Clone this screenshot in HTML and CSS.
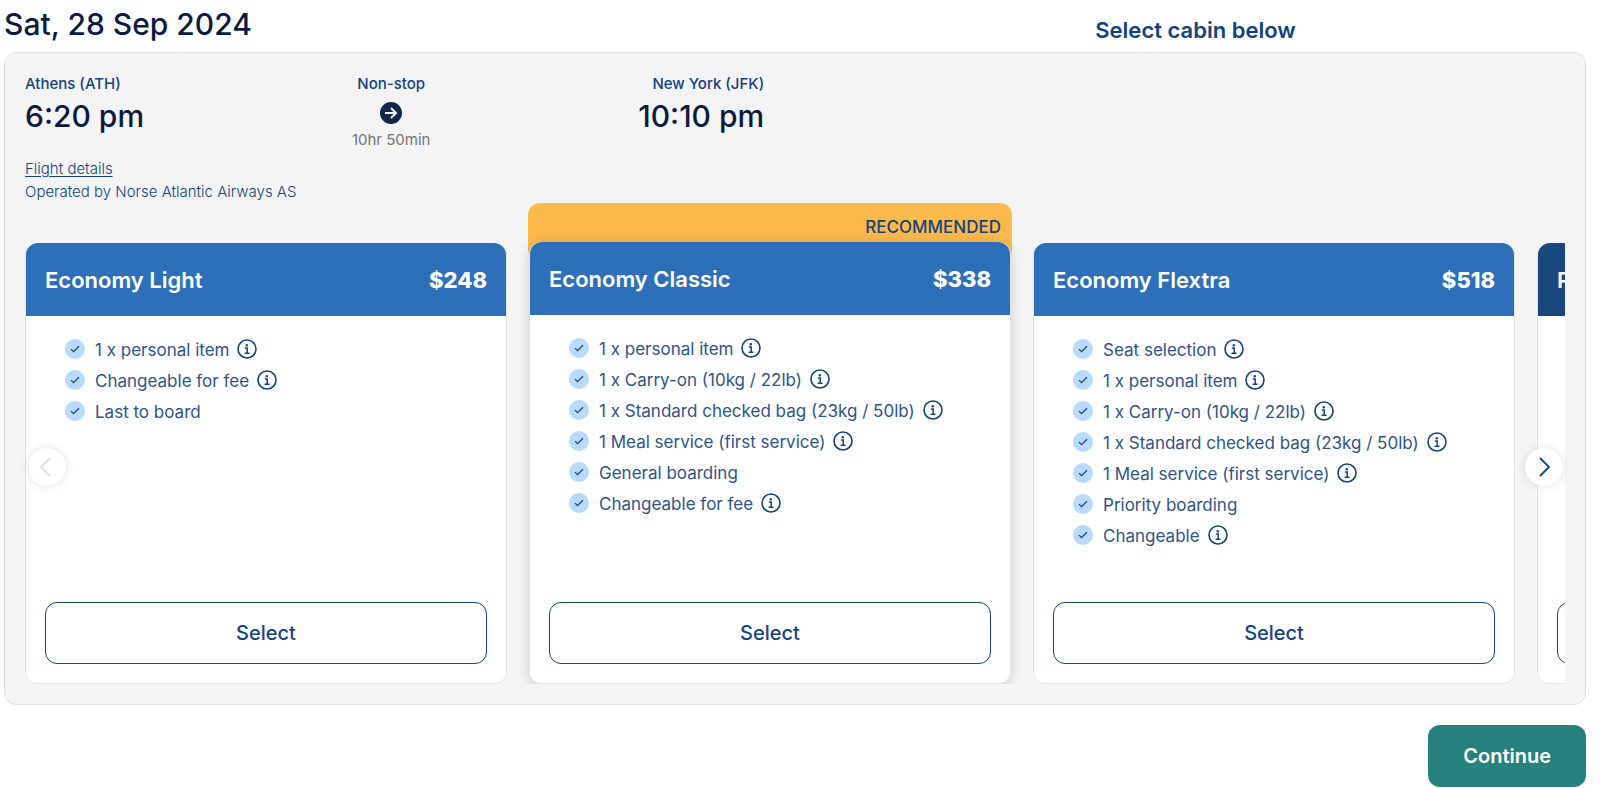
FILE: index.html
```html
<!DOCTYPE html>
<html lang="en">
<head>
<meta charset="utf-8">
<meta name="viewport" content="width=device-width, initial-scale=1">
<title>Select flight</title>
<link rel="stylesheet" href="styles.css">
</head>
<body>
<svg class="sprite" aria-hidden="true">
  <symbol id="check" viewBox="0 0 20 20">
    <circle cx="10" cy="10" r="10" fill="#b8dbfd"/>
    <path d="M6 10.2l2.5 2.5L14 7.3" fill="none" stroke="#1d3f70" stroke-width="1.2"/>
  </symbol>
  <symbol id="info" viewBox="0 0 20 20">
    <circle cx="10" cy="10" r="9" fill="none" stroke="#14427f" stroke-width="1.6"/>
    <circle cx="9.8" cy="6.2" r="1.2" fill="#14427f"/>
    <path d="M7.9 9.1h2.3v5M7.6 14.2h4.9" fill="none" stroke="#14427f" stroke-width="1.5"/>
  </symbol>
</svg>
<main class="page">
  <header class="heading">
    <h1 class="heading-date">Sat, 28 Sep 2024</h1>
    <p class="heading-hint">Select cabin below</p>
  </header>

  <section class="flight">
    <div class="route">
      <div class="stop">
        <span class="label">Athens (ATH)</span>
        <span class="time">6:20 pm</span>
      </div>
      <div class="stop stop-middle">
        <span class="label">Non-stop</span>
        <svg class="arrow" viewBox="0 0 22 22" aria-hidden="true">
          <circle cx="11" cy="11" r="11" fill="#14264a"/>
          <path d="M5 11h11M11 6l5 5-5 5" fill="none" stroke="#f4f4f4" stroke-width="2"/>
        </svg>
        <span class="duration">10hr 50min</span>
      </div>
      <div class="stop stop-end">
        <span class="label">New York (JFK)</span>
        <span class="time">10:10 pm</span>
      </div>
    </div>
    <div class="meta">
      <a class="details" href="#">Flight details</a>
      <span>Operated by Norse Atlantic Airways AS</span>
    </div>

    <div class="carousel">
      <div class="track">
        <div class="slide">
          <article class="card">
            <header class="card-head"><h2 class="card-name">Economy Light</h2><span class="price">$248</span></header>
            <ul class="features">
              <li class="feature"><svg class="icon"><use href="#check"/></svg><span class="feature-text">1 x personal item</span><svg class="icon icon-info"><use href="#info"/></svg></li>
              <li class="feature"><svg class="icon"><use href="#check"/></svg><span class="feature-text">Changeable for fee</span><svg class="icon icon-info"><use href="#info"/></svg></li>
              <li class="feature"><svg class="icon"><use href="#check"/></svg><span class="feature-text">Last to board</span></li>
            </ul>
            <button class="select" type="button">Select</button>
          </article>
        </div>
        <div class="slide slide-recommended">
          <p class="banner">RECOMMENDED</p>
          <article class="card card-raised">
            <header class="card-head"><h2 class="card-name">Economy Classic</h2><span class="price">$338</span></header>
            <ul class="features">
              <li class="feature"><svg class="icon"><use href="#check"/></svg><span class="feature-text">1 x personal item</span><svg class="icon icon-info"><use href="#info"/></svg></li>
              <li class="feature"><svg class="icon"><use href="#check"/></svg><span class="feature-text">1 x Carry-on (10kg / 22lb)</span><svg class="icon icon-info"><use href="#info"/></svg></li>
              <li class="feature"><svg class="icon"><use href="#check"/></svg><span class="feature-text">1 x Standard checked bag (23kg / 50lb)</span><svg class="icon icon-info"><use href="#info"/></svg></li>
              <li class="feature"><svg class="icon"><use href="#check"/></svg><span class="feature-text">1 Meal service (first service)</span><svg class="icon icon-info"><use href="#info"/></svg></li>
              <li class="feature"><svg class="icon"><use href="#check"/></svg><span class="feature-text">General boarding</span></li>
              <li class="feature"><svg class="icon"><use href="#check"/></svg><span class="feature-text">Changeable for fee</span><svg class="icon icon-info"><use href="#info"/></svg></li>
            </ul>
            <button class="select" type="button">Select</button>
          </article>
        </div>
        <div class="slide">
          <article class="card">
            <header class="card-head"><h2 class="card-name">Economy Flextra</h2><span class="price">$518</span></header>
            <ul class="features">
              <li class="feature"><svg class="icon"><use href="#check"/></svg><span class="feature-text">Seat selection</span><svg class="icon icon-info"><use href="#info"/></svg></li>
              <li class="feature"><svg class="icon"><use href="#check"/></svg><span class="feature-text">1 x personal item</span><svg class="icon icon-info"><use href="#info"/></svg></li>
              <li class="feature"><svg class="icon"><use href="#check"/></svg><span class="feature-text">1 x Carry-on (10kg / 22lb)</span><svg class="icon icon-info"><use href="#info"/></svg></li>
              <li class="feature"><svg class="icon"><use href="#check"/></svg><span class="feature-text">1 x Standard checked bag (23kg / 50lb)</span><svg class="icon icon-info"><use href="#info"/></svg></li>
              <li class="feature"><svg class="icon"><use href="#check"/></svg><span class="feature-text">1 Meal service (first service)</span><svg class="icon icon-info"><use href="#info"/></svg></li>
              <li class="feature"><svg class="icon"><use href="#check"/></svg><span class="feature-text">Priority boarding</span></li>
              <li class="feature"><svg class="icon"><use href="#check"/></svg><span class="feature-text">Changeable</span><svg class="icon icon-info"><use href="#info"/></svg></li>
            </ul>
            <button class="select" type="button">Select</button>
          </article>
        </div>
        <div class="slide">
          <article class="card">
            <header class="card-head card-head-premium"><h2 class="card-name">P</h2></header>
            <ul class="features"></ul>
            <button class="select" type="button" aria-label="Select"></button>
          </article>
        </div>
      </div>
      <button class="nav nav-prev" type="button" aria-label="Previous" disabled>
        <svg class="chevron" viewBox="0 0 20 20"><path d="M13 1L4 10l9 9" fill="none" stroke="currentColor" stroke-width="1.8"/></svg>
      </button>
      <button class="nav nav-next" type="button" aria-label="Next">
        <svg class="chevron" viewBox="0 0 20 20"><path d="M6 1l9 9-9 9" fill="none" stroke="currentColor" stroke-width="1.8"/></svg>
      </button>
    </div>
  </section>

  <div class="actions">
    <button class="continue" type="button">Continue</button>
  </div>
</main>
</body>
</html>
```

FILE: styles.css
```css
* {
  box-sizing: border-box;
}

body {
  margin: 0;
  background: #fff;
  color: #14427f;
  font-family: Inter, "Liberation Sans", sans-serif;
  font-size: 16px;
}

h1, h2, p, ul {
  margin: 0;
  padding: 0;
}

button {
  font-family: inherit;
  cursor: pointer;
}

.sprite {
  position: absolute;
  width: 0;
  height: 0;
}

.page {
  padding: 0 14px 0 4px;
}

.heading {
  display: grid;
  grid-template-columns: 1fr 1fr;
  column-gap: 20px;
  height: 52px;
}

.heading-date {
  color: #0b1a3f;
  font-size: 30px;
  font-weight: 500;
  line-height: 48px;
}

.heading-hint {
  padding-top: 8px;
  font-size: 22px;
  font-weight: 600;
  line-height: 44px;
  text-align: center;
}

.flight {
  padding: 20px;
  border: 1px solid #e2e2e2;
  border-radius: 12px;
  background: #f4f4f4;
}

.route {
  display: flex;
  justify-content: space-between;
  width: 48%;
  height: 78px;
}

.stop {
  display: flex;
  flex-direction: column;
}

.stop-middle {
  align-items: center;
}

.stop-end {
  align-items: flex-end;
}

.label {
  font-size: 15px;
  font-weight: 500;
  line-height: 22px;
}

.time {
  color: #0b1a3f;
  font-size: 30px;
  font-weight: 500;
  line-height: 42px;
}

.arrow {
  width: 22px;
  height: 22px;
  margin: 7px 0 6px;
}

.duration {
  color: #757575;
  font-size: 15px;
  line-height: 20px;
}

.meta {
  display: flex;
  flex-direction: column;
  align-items: flex-start;
  margin-top: 6px;
  font-size: 15px;
  font-weight: 300;
  line-height: 23px;
}

.details {
  color: inherit;
  text-underline-offset: 2px;
}

.carousel {
  position: relative;
}

.track {
  display: flex;
  gap: 22px;
  overflow: hidden;
}

.slide {
  display: flex;
  flex: 0 0 31.3%;
  flex-direction: column;
  padding-top: 40px;
}

.slide-recommended {
  padding-top: 0;
}

.banner {
  height: 50px;
  margin: 0 -1px -11px;
  padding: 0 11px;
  border-radius: 12px 12px 0 0;
  background: #fbba4a;
  font-size: 17px;
  font-weight: 500;
  line-height: 48px;
  text-align: right;
}

.card {
  display: flex;
  flex: 1;
  flex-direction: column;
  border: 1px solid #e4e4e4;
  border-top: 0;
  border-radius: 12px;
  background: #fff;
}

.card-raised {
  z-index: 1;
  box-shadow: 0 2px 12px rgba(20, 50, 100, 0.2);
}

.card-head {
  display: flex;
  align-items: center;
  justify-content: space-between;
  height: 73px;
  padding: 0 19px;
  border-radius: 12px 12px 0 0;
  background: #2d70b9;
  color: #fff;
}

.card-head-premium {
  background: #1b477f;
}

.card-name {
  font-size: 22px;
  font-weight: 600;
}

.price {
  font-size: 22px;
  font-weight: 800;
}

.features {
  flex: 1;
  padding: 17px 39px 52px;
  list-style: none;
}

.feature {
  display: flex;
  align-items: center;
  height: 31px;
  color: #2f5389;
  font-size: 17px;
}

.feature-text {
  padding-top: 2px;
}

.icon {
  flex: none;
  width: 20px;
  height: 20px;
  margin-right: 10px;
}

.icon-info {
  margin: 0 0 0 8px;
}

.select {
  height: 62px;
  margin: 0 19px 19px;
  border: 1px solid #14427f;
  border-radius: 12px;
  background: #fff;
  color: #14427f;
  font-size: 20px;
  font-weight: 500;
}

.nav {
  position: absolute;
  top: 245px;
  z-index: 2;
  display: flex;
  align-items: center;
  justify-content: center;
  width: 38px;
  height: 38px;
  padding: 0;
  border: 0;
  border-radius: 50%;
  background: #fff;
  box-shadow: 0 0 8px rgba(20, 50, 100, 0.15);
  color: #14427f;
}

.nav-prev {
  left: 3px;
  color: #dedede;
}

.nav-next {
  right: 2px;
}

.chevron {
  width: 20px;
  height: 20px;
}

.actions {
  display: flex;
  justify-content: flex-end;
  padding-top: 20px;
}

.continue {
  height: 62px;
  padding: 0 35px;
  border: 0;
  border-radius: 12px;
  background: #27827f;
  color: #fff;
  font-size: 20px;
  font-weight: 600;
}
```
